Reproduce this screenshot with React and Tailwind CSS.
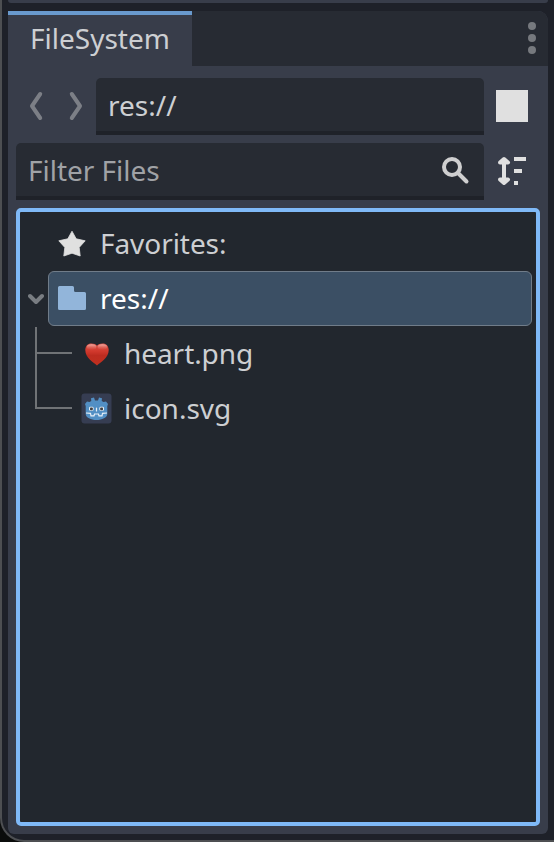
import React from "react";

function Chevron({ flip }) {
  return (
    <svg width="16" height="32" viewBox="0 0 16 32" className={flip ? "-scale-x-100" : ""}>
      <path d="M12.2 4 L4 16 L12.2 28" fill="none" stroke="#7c7f86" strokeWidth="4" strokeLinecap="round" strokeLinejoin="round" />
    </svg>
  );
}

function Star() {
  return (
    <svg width="28" height="28" viewBox="0 0 28 28">
      <path d="M14 1.2 L18.2 8.8 L27.2 10.8 L21.2 17.4 L22.2 26 L14 23.2 L5.8 26 L6.8 17.4 L0.8 10.8 L9.8 8.8 Z" fill="#e0e0e0" stroke="#e0e0e0" strokeWidth="0.8" strokeLinejoin="round" />
    </svg>
  );
}

function Folder() {
  return (
    <svg width="28" height="24" viewBox="0 0 28 24">
      <path d="M1.5 0 H14.5 Q16 0 16 1.5 V4.5 Q16 6 17.5 6 H26.5 Q28 6 28 7.5 V22.5 Q28 24 26.5 24 H1.5 Q0 24 0 22.5 V1.5 Q0 0 1.5 0 Z" fill="#92b5da" />
    </svg>
  );
}

function Heart() {
  return (
    <svg width="24" height="23" viewBox="0 0 24 23">
      <defs>
        <linearGradient id="heart" x1="0" y1="0" x2="0" y2="1">
          <stop offset="0" stopColor="#d95349" />
          <stop offset="0.35" stopColor="#d2392d" />
          <stop offset="0.55" stopColor="#bd2c20" />
          <stop offset="1" stopColor="#c0301f" />
        </linearGradient>
        <linearGradient id="shine" x1="0" y1="0" x2="0" y2="1">
          <stop offset="0" stopColor="#f5b9b2" stopOpacity="0.9" />
          <stop offset="1" stopColor="#e0665a" stopOpacity="0.1" />
        </linearGradient>
      </defs>
      <path d="M12 22.5 C9 19.5 0.3 15.5 0.3 7 C0.3 3 2.8 0.4 6.3 0.4 C9 0.4 11 1.2 12 2.8 C13 1.2 15 0.4 17.7 0.4 C21.2 0.4 23.7 3 23.7 7 C23.7 15.5 15 19.5 12 22.5 Z" fill="url(#heart)" />
      <ellipse cx="6.6" cy="4" rx="4.8" ry="2.8" fill="url(#shine)" />
      <ellipse cx="17.4" cy="4" rx="4.8" ry="2.8" fill="url(#shine)" />
    </svg>
  );
}

function Godot() {
  return (
    <svg width="31" height="31" viewBox="0 0 31 31">
      <rect x="0.5" y="0.5" width="30" height="30" rx="3" fill="#363d52" />
      <path d="M4 11 L6 8.5 L8.5 9 L10.3 8 L10 5.2 L13 4.5 L14 7.5 H17 L18 4.5 L21 5.2 L20.7 8 L22.5 9 L25 8.5 L27 11 L26.3 13 V21 C26.3 24.5 21 27 15.5 27 C10 27 4.7 24.5 4.7 21 V13 Z" fill="#528fc4" />
      <path d="M5 20 L9.5 20.3 L10 22.8 H13 L13.5 21 H17.5 L18 22.8 H21 L21.5 20.3 L26 20" fill="none" stroke="#e8f0f7" strokeWidth="1.2" />
      <rect x="8" y="13.8" width="4.6" height="4" rx="1.4" fill="#e8f0f7" />
      <rect x="18.4" y="13.8" width="4.6" height="4" rx="1.4" fill="#e8f0f7" />
      <rect x="9" y="14.4" width="2.8" height="2.8" rx="0.8" fill="#414042" />
      <rect x="19.2" y="14.4" width="2.8" height="2.8" rx="0.8" fill="#414042" />
      <path d="M15.5 15 V18" stroke="#e8f0f7" strokeWidth="1.2" strokeLinecap="round" />
    </svg>
  );
}

function Field({ className, children }) {
  return (
    <div className={`flex h-[57px] items-center justify-between rounded-t-[5px] border-b-4 border-[#1f2229] bg-[#272b33] pl-3 ${className}`}>
      {children}
    </div>
  );
}

export default function App() {
  return (
    <div className="h-[842px] w-[554px] overflow-hidden bg-[#0b0d0c] font-['Noto_Sans',sans-serif] text-[28px] leading-[38px] text-[#cdcfd2]">
      <div className="flex h-[842px] flex-col rounded-bl-[24px] border-b-2 border-l-2 border-[#4d4f52] bg-[#1e2129] pr-1.5 pl-1.5">
        <div className="h-[3px] shrink-0 rounded-b-[3px] bg-[#383d4a]" />
        <div className="mt-2 flex h-[823px] flex-col rounded-tr-[10px] rounded-b-[6px] bg-[#383d4a]">
          <div className="flex h-[55px] shrink-0 items-stretch justify-between rounded-tr-[10px] bg-[#272b33]">
            <div className="w-[184px] border-t-4 border-[#699ace] bg-[#383d4a] pt-1 pl-[22px]">FileSystem</div>
            <div className="mr-3 flex flex-col gap-1 pt-[11px]">
              <span className="size-2 rounded-full bg-[#76797e]" />
              <span className="size-2 rounded-full bg-[#76797e]" />
              <span className="size-2 rounded-full bg-[#76797e]" />
            </div>
          </div>
          <div className="mt-3 flex items-start pl-5">
            <div className="mt-3 flex gap-6">
              <Chevron />
              <Chevron flip />
            </div>
            <Field className="ml-3 w-[388px]"><span>res://</span></Field>
            <div className="mt-3 ml-3 size-8 bg-[#e0e0e0]" />
          </div>
          <div className="mt-2 flex items-start pl-2">
            <Field className="w-[468px] pr-3">
              <span className="tracking-[-0.03px] text-[#a0a2a6]">Filter Files</span>
              <svg width="32" height="32" viewBox="0 0 32 32" className="mt-[3px]">
                <circle cx="12" cy="12" r="8" fill="none" stroke="#cfcfd0" strokeWidth="4" />
                <path d="M18 18 L26.5 26.5" stroke="#cfcfd0" strokeWidth="4" strokeLinecap="round" />
              </svg>
            </Field>
            <svg width="32" height="32" viewBox="0 0 32 32" className="mt-3 ml-3">
              <path d="M8 6 V26" stroke="#e0e0e0" strokeWidth="4" />
              <path d="M4 7.5 L8 4 L12 7.5 Z M4 24.5 L8 28 L12 24.5 Z" fill="#e0e0e0" stroke="#e0e0e0" strokeWidth="4" strokeLinejoin="round" />
              <path d="M18 2 H30 V6 H18 Z M18 14 H26 V18 H18 Z M18 26 H22 V30 H18 Z" fill="#e0e0e0" />
            </svg>
          </div>
          <div className="mx-2 mt-2 flex h-[618px] flex-col rounded-[5px] border-4 border-[#7fb9f7] bg-[#22272e] pt-[4px] tracking-[-0.06px]">
            <div className="flex h-[55px] items-center pl-[38px]">
              <Star />
              <span className="mb-0.5 ml-[14px]">Favorites:</span>
            </div>
            <div className="flex h-[55px] items-center pr-1 pl-2">
              <svg width="16" height="12" viewBox="0 0 16 12">
                <path d="M2 3 L8 9 L14 3" fill="none" stroke="#797d82" strokeWidth="4" strokeLinecap="round" strokeLinejoin="round" />
              </svg>
              <div className="ml-1 flex h-[55px] flex-1 items-center rounded-[6px] border border-[#707c89] bg-[#3b4f64] pl-[9px] tracking-normal text-white">
                <div className="mb-px"><Folder /></div>
                <span className="mb-0.5 ml-[14px]">res://</span>
              </div>
            </div>
            <div className="flex pl-[15px]">
              <svg width="37" height="110" viewBox="0 0 37 110">
                <path d="M1 1 V82 H37 M1 27 H37" fill="none" stroke="#707376" strokeWidth="2" />
              </svg>
              <div className="ml-[9px]">
                <div className="flex h-[55px] items-center">
                  <div className="flex w-[31px] justify-center pt-px"><Heart /></div>
                  <span className="mb-0.5 ml-3">heart.png</span>
                </div>
                <div className="flex h-[55px] items-center">
                  <Godot />
                  <span className="mb-0.5 ml-3 tracking-normal">icon.svg</span>
                </div>
              </div>
            </div>
          </div>
        </div>
      </div>
    </div>
  );
}
